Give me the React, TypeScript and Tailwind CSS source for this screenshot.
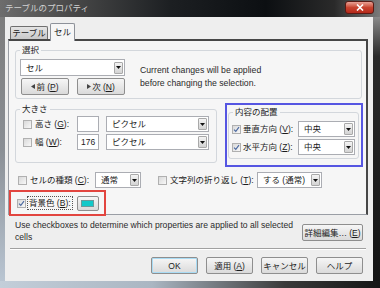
import React from "react";

function Check({ on }: { on?: boolean }) {
  return (
    <span className="flex h-[9px] w-[9px] shrink-0 items-center justify-center border border-[#b0b0b0] bg-gradient-to-br from-[#d9d9d9] to-[#f8f8f8]">
      {on && (
        <svg width="7" height="7" viewBox="0 0 7 7">
          <path d="M1 3.6 2.8 5.4 6 1.2" fill="none" stroke="#4a68a0" strokeWidth="1.1" />
        </svg>
      )}
    </span>
  );
}

function Arrow() {
  return (
    <span className="flex h-[12px] w-[9px] shrink-0 items-center justify-center rounded-[1px] border border-[#a9a9a9] bg-gradient-to-b from-[#f4f4f4] to-[#d3d3d3]">
      <svg width="5" height="3" viewBox="0 0 5 3">
        <path d="M0 0h5L2.5 3z" fill="#111" />
      </svg>
    </span>
  );
}

function Select({ value, className }: { value: string; className: string }) {
  return (
    <div className={`flex items-center border border-[#abadb3] bg-white pr-[1px] ${className}`}>
      <span className="flex-1 truncate pl-[5px] leading-[12px]">{value}</span>
      <Arrow />
    </div>
  );
}

function Btn({ children, className }: { children: React.ReactNode; className: string }) {
  return (
    <div
      className={`flex h-[17px] items-center justify-center whitespace-nowrap rounded-[2px] border border-[#8e8e8e] bg-gradient-to-b from-[#f6f6f6] to-[#dadada] leading-[12px] ${className}`}
    >
      {children}
    </div>
  );
}

function Group({ label, className, children }: { label: string; className: string; children: React.ReactNode }) {
  return (
    <div className={`relative rounded-[3px] border border-[#d3d7dc] ${className}`}>
      <span className="absolute left-[4px] top-[-7px] bg-[#f6f6f6] px-[2px] leading-[12px]">{label}</span>
      {children}
    </div>
  );
}

export default function App() {
  return (
    <div className="flex h-[288px] w-[380px] flex-col overflow-hidden bg-[#1c1c1c] font-['Liberation_Sans','Noto_Sans_CJK_JP',sans-serif] text-[8.5px] text-[#1b1b1b]">
      {/* title bar */}
      <div className="flex h-[17px] shrink-0 items-start bg-[linear-gradient(to_right,#6d6d6d_0%,#4a4a4a_18%,#1c1f22_45%,#0c0f12_70%,#2a2a2a_88%,#7a7a7a_100%)]">
        <span className="ml-[5px] mt-[3px] text-[8.5px] leading-[11px] text-[#d2d2d2]">テーブルのプロパティ</span>
        <div className="ml-auto mr-[6px] mt-[1px] flex h-[13px] w-[29px] items-center justify-center rounded-[3px] border border-[#5a1a14] bg-gradient-to-b from-[#e8a195] via-[#c8432f] to-[#b5281a]">
          <svg width="8" height="7" viewBox="0 0 8 7">
            <path d="M1 0.5 7 6.5M7 0.5 1 6.5" stroke="#fff" strokeWidth="1.6" />
          </svg>
        </div>
      </div>

      <div className="flex h-[264px] shrink-0">
        <div className="w-[5px] bg-gradient-to-b from-[#7c7c7c] via-[#8a8f95] to-[#b9c5d2]" />

        {/* client area */}
        <div className="flex h-[264px] w-[368px] flex-col bg-[#eeeeee]">
          {/* tabs */}
          <div className="relative z-10 mb-[-2px] ml-[5px] mt-[6px] flex h-[18px] items-end">
            <div className="mb-[2px] flex h-[13px] w-[38px] items-center justify-center rounded-t-[2px] border border-b-0 border-[#6f6f6f] bg-gradient-to-b from-[#e4e4e4] to-[#c9c9c9] leading-[12px]">
              テーブル
            </div>
            <div className="ml-[2px] flex h-[18px] w-[25px] items-start justify-center rounded-t-[2px] border border-b-0 border-[#8d9199] bg-[#f6f6f6] pt-[2px] leading-[12px]">
              セル
            </div>
          </div>

          {/* tab panel */}
          <div className="ml-[3px] flex w-[360px] flex-col border border-r-2 border-t-2 border-[#9a9ea5] border-r-[#474747] border-t-[#474747] bg-[#f6f6f6]">
            <Group label="選択" className="ml-[6px] mt-[9px] flex h-[49px] w-[347px]">
              <div className="flex flex-col pl-[4px] pt-[8px]">
                <Select value="セル" className="h-[17px] w-[105px]" />
                <div className="ml-[1px] mt-[2px] flex gap-[8px]">
                  <Btn className="w-[48px]">
                    <svg width="4" height="5" viewBox="0 0 4 5" className="mr-[1px]">
                      <path d="M4 0v5L0 2.5z" fill="#444" />
                    </svg>
                    前 (<u>P</u>)
                  </Btn>
                  <Btn className="w-[48px]">
                    <svg width="4" height="5" viewBox="0 0 4 5" className="mr-[1px]">
                      <path d="M0 0v5L4 2.5z" fill="#444" />
                    </svg>
                    次 (<u>N</u>)
                  </Btn>
                </div>
              </div>
              <div className="ml-[15px] pt-[13px] text-[8.7px] leading-[13px] text-[#2a2a2a]">
                <div>Current changes will be applied</div>
                <div>before changing the selection.</div>
              </div>
            </Group>

            <div className="mt-[4px] flex items-start">
              <Group label="大きさ" className="ml-[6px] mt-[6px] h-[54px] w-[202px]">
                <div className="flex flex-col gap-[2px] pl-[7px] pt-[6px]">
                  <div className="flex h-[16px] items-center">
                    <Check />
                    <span className="ml-[3px] w-[42px]">
                      高さ (<u>G</u>):
                    </span>
                    <div className="h-[16px] w-[22px] border border-[#abadb3] bg-white" />
                    <Select value="ピクセル" className="ml-[7px] h-[16px] w-[103px]" />
                  </div>
                  <div className="flex h-[16px] items-center">
                    <Check />
                    <span className="ml-[3px] w-[42px]">
                      幅 (<u>W</u>):
                    </span>
                    <div className="flex h-[16px] w-[22px] items-center border border-[#abadb3] bg-white pl-[3px]">176</div>
                    <Select value="ピクセル" className="ml-[7px] h-[16px] w-[103px]" />
                  </div>
                </div>
              </Group>

              <div className="ml-[8px] h-[64px] w-[138px] border-2 border-[#5656e2]">
                <Group label="内容の配置" className="ml-[1px] mt-[7px] h-[47px] w-[131px]">
                  <div className="flex flex-col gap-[2px] pl-[3px] pt-[8px]">
                    <div className="flex h-[16px] items-center">
                      <Check on />
                      <span className="ml-[2px] w-[55px] whitespace-nowrap">
                        垂直方向 (<u>V</u>):
                      </span>
                      <Select value="中央" className="h-[16px] w-[57px]" />
                    </div>
                    <div className="flex h-[16px] items-center">
                      <Check on />
                      <span className="ml-[2px] w-[55px] whitespace-nowrap">
                        水平方向 (<u>Z</u>):
                      </span>
                      <Select value="中央" className="h-[16px] w-[57px]" />
                    </div>
                  </div>
                </Group>
              </div>
            </div>

            <div className="mt-[5px] flex h-[16px] items-center pl-[9px]">
              <Check />
              <span className="ml-[3px] w-[65px] whitespace-nowrap">
                セルの種類 (<u>C</u>):
              </span>
              <Select value="通常" className="h-[16px] w-[46px]" />
              <span className="ml-[17px]">
                <Check />
              </span>
              <span className="ml-[3px] w-[87px] whitespace-nowrap">
                文字列の折り返し (<u>T</u>):
              </span>
              <Select value="する (通常)" className="h-[16px] w-[65px]" />
            </div>

            <div className="mb-[-2px] mt-[2px] flex h-[26px] w-[97px] items-center border-2 border-[#e2453f] pl-[6px]">
              <Check on />
              <span className="ml-[1px] flex h-[14px] items-center whitespace-nowrap border border-dotted border-[#555] px-[1px]">
                背景色 (<u>B</u>):
              </span>
              <div className="ml-[4px] flex h-[15px] w-[22px] items-center justify-center rounded-[2px] border border-[#8e8e8e] bg-gradient-to-b from-[#f6f6f6] to-[#dadada]">
                <div className="h-[7px] w-[13px] border border-[#6a9a9a] bg-[#12c9c9]" />
              </div>
            </div>
          </div>

          {/* description + advanced */}
          <div className="flex items-start">
            <div className="ml-[10px] mt-[4px] w-[286px] text-[8.6px] leading-[12px] text-[#2a2a2a]">
              Use checkboxes to determine which properties are applied to all selected cells
            </div>
            <Btn className="ml-auto mr-[10px] mt-[9px] w-[61px]">
              詳細編集… (<u>E</u>)
            </Btn>
          </div>

          <div className="ml-[5px] mr-[7px] mt-[5px] h-[2px] border-b border-t border-b-white border-t-[#a0a0a0]" />

          <div className="mt-[7px] flex justify-end gap-[8px] pr-[10px]">
            <Btn className="w-[47px] border-[#3c7fb1] shadow-[inset_0_0_0_1px_#a9dcf5]">OK</Btn>
            <Btn className="w-[47px]">
              適用 (<u>A</u>)
            </Btn>
            <Btn className="w-[47px]">キャンセル</Btn>
            <Btn className="w-[47px]">ヘルプ</Btn>
          </div>
        </div>

        <div className="w-[7px] bg-gradient-to-b from-[#8a8a8a] via-[#2a2a2a] via-15% to-[#141414]" />
      </div>

      <div className="h-[7px] shrink-0 bg-[linear-gradient(to_right,#c3ced9_0%,#aab6c2_40%,#3a3a3a_75%,#151515_100%)]" />
    </div>
  );
}
